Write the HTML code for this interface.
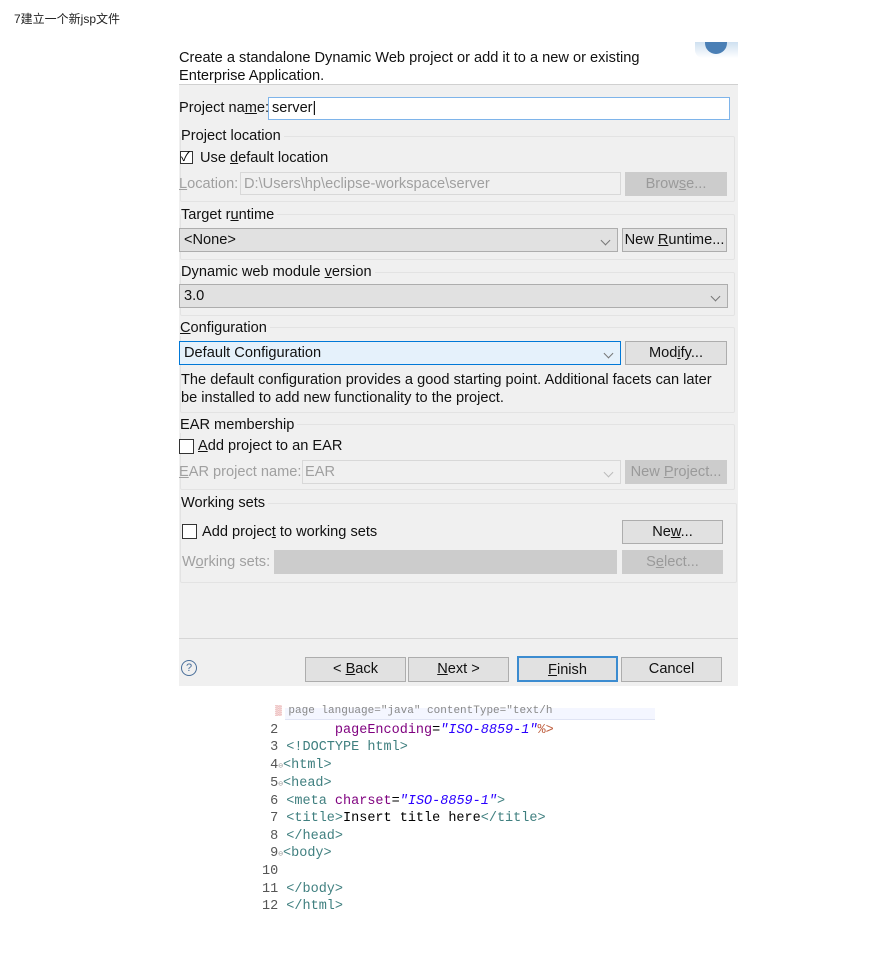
<!DOCTYPE html>
<html><head><meta charset="utf-8"><style>
body{margin:0;width:894px;height:976px;background:#fff;position:relative;font-family:"Liberation Sans","Noto Sans CJK SC",sans-serif;overflow:hidden}
.a{position:absolute;white-space:nowrap}
.t{font-size:14.6px;color:#111;font-family:"Liberation Sans",sans-serif}
.g{color:#a0a0a0}
.box{position:absolute;box-sizing:border-box}
.btn{position:absolute;box-sizing:border-box;background:#e1e1e1;border:1px solid #adadad;font-size:14.6px;text-align:center;color:#111}
.dis{background:#ccc;border-color:#ccc;color:#9a9a9a}
.combo{position:absolute;box-sizing:border-box;background:#e1e1e1;border:1px solid #adadad;font-size:14.6px;padding-left:4px;color:#111}
.chev{position:absolute;right:8px;top:8px;width:6px;height:6px;border-right:1px solid #777;border-bottom:1px solid #777;transform:rotate(45deg)}
.grp{position:absolute;border:1px solid #e3e3e3;border-radius:2px}
.cb{position:absolute;width:13px;height:13px;border:1px solid #333;background:#fff;box-sizing:border-box}
.code{position:absolute;font-family:"Liberation Mono",monospace;font-size:13.5px;line-height:17.3px;color:#3f7f7f;white-space:pre}
.n{color:#555}.k{color:#7f007f}.s{color:#2a00ff;font-style:italic}.b{color:#000}
.f{color:#999;font-size:8px;letter-spacing:0}
</style></head><body>
<div class="a" style="left:14px;top:10px;font-size:12px;color:#222">7建立一个新jsp文件</div>

<div class="box" style="left:179px;top:42px;width:559px;height:644px;background:#f0f0f0"></div>
<div class="box" style="left:179px;top:42px;width:559px;height:43px;background:#fff;border-bottom:1px solid #d0d0d0"></div>
<div class="box" style="left:695px;top:42px;width:43px;height:16px;background:linear-gradient(#cfe0f0,#fff);border-radius:0 0 0 8px"></div>
<div class="box" style="left:705px;top:42px;width:22px;height:12px;background:#4a7fb5;border-radius:0 0 11px 11px"></div>
<div class="a t" style="left:179px;top:49px;line-height:18px">Create a standalone Dynamic Web project or add it to a new or existing<br>Enterprise Application.</div>

<div class="a t" style="left:179px;top:100px">Project na<u>m</u>e:</div>
<div class="box" style="left:268px;top:97px;width:462px;height:23px;background:#fff;border:1px solid #7eb4ea"></div>
<div class="a t" style="left:272px;top:100px">server|</div>

<div class="grp" style="left:180px;top:136px;width:553px;height:64px"></div>
<div class="a t" style="left:181px;top:128px;background:#f0f0f0;padding-right:3px">Project location</div>
<div class="cb" style="left:180px;top:151px"></div><div class="a" style="left:181px;top:146px;font-size:13px">✓</div>
<div class="a t" style="left:200px;top:150px">Use <u>d</u>efault location</div>
<div class="a t g" style="left:179px;top:176px"><u>L</u>ocation:</div>
<div class="box" style="left:240px;top:172px;width:381px;height:23px;background:#f0f0f0;border:1px solid #d8d8d8"></div>
<div class="a t g" style="left:244px;top:176px">D:\Users\hp\eclipse-workspace\server</div>
<div class="btn dis" style="left:625px;top:172px;width:102px;height:24px;line-height:22px">Brow<u>s</u>e...</div>

<div class="grp" style="left:180px;top:214px;width:553px;height:44px"></div>
<div class="a t" style="left:181px;top:207px;background:#f0f0f0;padding-right:3px">Target r<u>u</u>ntime</div>
<div class="combo" style="left:179px;top:228px;width:439px;height:24px;line-height:22px">&lt;None&gt;<span class="chev"></span></div>
<div class="btn" style="left:622px;top:228px;width:105px;height:24px;line-height:22px">New <u>R</u>untime...</div>

<div class="grp" style="left:180px;top:272px;width:553px;height:42px"></div>
<div class="a t" style="left:181px;top:264px;background:#f0f0f0;padding-right:3px">Dynamic web module <u>v</u>ersion</div>
<div class="combo" style="left:179px;top:284px;width:549px;height:24px;line-height:22px">3.0<span class="chev"></span></div>

<div class="grp" style="left:180px;top:327px;width:553px;height:84px"></div>
<div class="a t" style="left:180px;top:320px;background:#f0f0f0;padding-right:3px"><u>C</u>onfiguration</div>
<div class="combo" style="left:179px;top:341px;width:442px;height:24px;line-height:22px;background:#e5f1fb;border-color:#0078d7">Default Configuration<span class="chev"></span></div>
<div class="btn" style="left:625px;top:341px;width:102px;height:24px;line-height:22px">Mod<u>i</u>fy...</div>
<div class="a t" style="left:181px;top:371px;line-height:18px">The default configuration provides a good starting point. Additional facets can later<br>be installed to add new functionality to the project.</div>

<div class="grp" style="left:180px;top:424px;width:553px;height:64px"></div>
<div class="a t" style="left:180px;top:417px;background:#f0f0f0;padding-right:3px">EAR membership</div>
<div class="cb" style="left:179px;top:439px;width:15px;height:15px"></div>
<div class="a t" style="left:198px;top:438px"><u>A</u>dd project to an EAR</div>
<div class="a t g" style="left:179px;top:464px"><u>E</u>AR project name:</div>
<div class="box" style="left:302px;top:460px;width:319px;height:24px;background:#f0f0f0;border:1px solid #d8d8d8"><span class="chev" style="border-color:#bbb"></span></div>
<div class="a t g" style="left:305px;top:464px">EAR</div>
<div class="btn dis" style="left:625px;top:460px;width:102px;height:24px;line-height:22px">New <u>P</u>roject...</div>

<div class="grp" style="left:180px;top:503px;width:555px;height:78px"></div>
<div class="a t" style="left:181px;top:495px;background:#f0f0f0;padding-right:3px">Working sets</div>
<div class="cb" style="left:182px;top:524px;width:15px;height:15px"></div>
<div class="a t" style="left:202px;top:524px">Add projec<u>t</u> to working sets</div>
<div class="btn" style="left:622px;top:520px;width:101px;height:24px;line-height:22px">Ne<u>w</u>...</div>
<div class="a t g" style="left:182px;top:554px">W<u>o</u>rking sets:</div>
<div class="box" style="left:274px;top:550px;width:343px;height:24px;background:#ccc"></div>
<div class="btn dis" style="left:622px;top:550px;width:101px;height:24px;line-height:22px">S<u>e</u>lect...</div>

<div class="box" style="left:179px;top:638px;width:559px;height:1px;background:#d6d6d6"></div>
<div class="box" style="left:181px;top:660px;width:16px;height:16px;border:1px solid #4a6f9a;border-radius:50%;font-size:11px;text-align:center;line-height:14px;color:#4a6f9a">?</div>
<div class="btn" style="left:305px;top:657px;width:101px;height:25px;line-height:23px">&lt; <u>B</u>ack</div>
<div class="btn" style="left:408px;top:657px;width:101px;height:25px;line-height:23px"><u>N</u>ext &gt;</div>
<div class="btn" style="left:517px;top:656px;width:101px;height:26px;line-height:24px;border:2px solid #3c8cd0"><u>F</u>inish</div>
<div class="btn" style="left:621px;top:657px;width:101px;height:25px;line-height:23px">Cancel</div>

<div class="box" style="left:285px;top:708px;width:370px;height:12px;background:#f4f6ff;border-bottom:1px solid #e0e4f4"></div>
<div class="code" style="left:262px;top:705px;color:#888;font-size:11px;line-height:12px;overflow:hidden;height:13px">  <span style="color:#c44">▒</span> page language="java" contentType="text/h</div>
<div class="code" style="left:262px;top:722px"><span class="n"> 2</span>       <span class="k">pageEncoding</span><span class="b">=</span><span class="s">"ISO-8859-1"</span><span style="color:#bf5f3f">%&gt;</span>
<span class="n"> 3</span> &lt;!DOCTYPE html&gt;
<span class="n"> 4</span><span class="f">⊖</span>&lt;html&gt;
<span class="n"> 5</span><span class="f">⊖</span>&lt;head&gt;
<span class="n"> 6</span> &lt;meta <span class="k">charset</span><span class="b">=</span><span class="s">"ISO-8859-1"</span>&gt;
<span class="n"> 7</span> &lt;title&gt;<span class="b">Insert title here</span>&lt;/title&gt;
<span class="n"> 8</span> &lt;/head&gt;
<span class="n"> 9</span><span class="f">⊖</span>&lt;body&gt;
<span class="n">10</span>
<span class="n">11</span> &lt;/body&gt;
<span class="n">12</span> &lt;/html&gt;</div>
</body></html>
